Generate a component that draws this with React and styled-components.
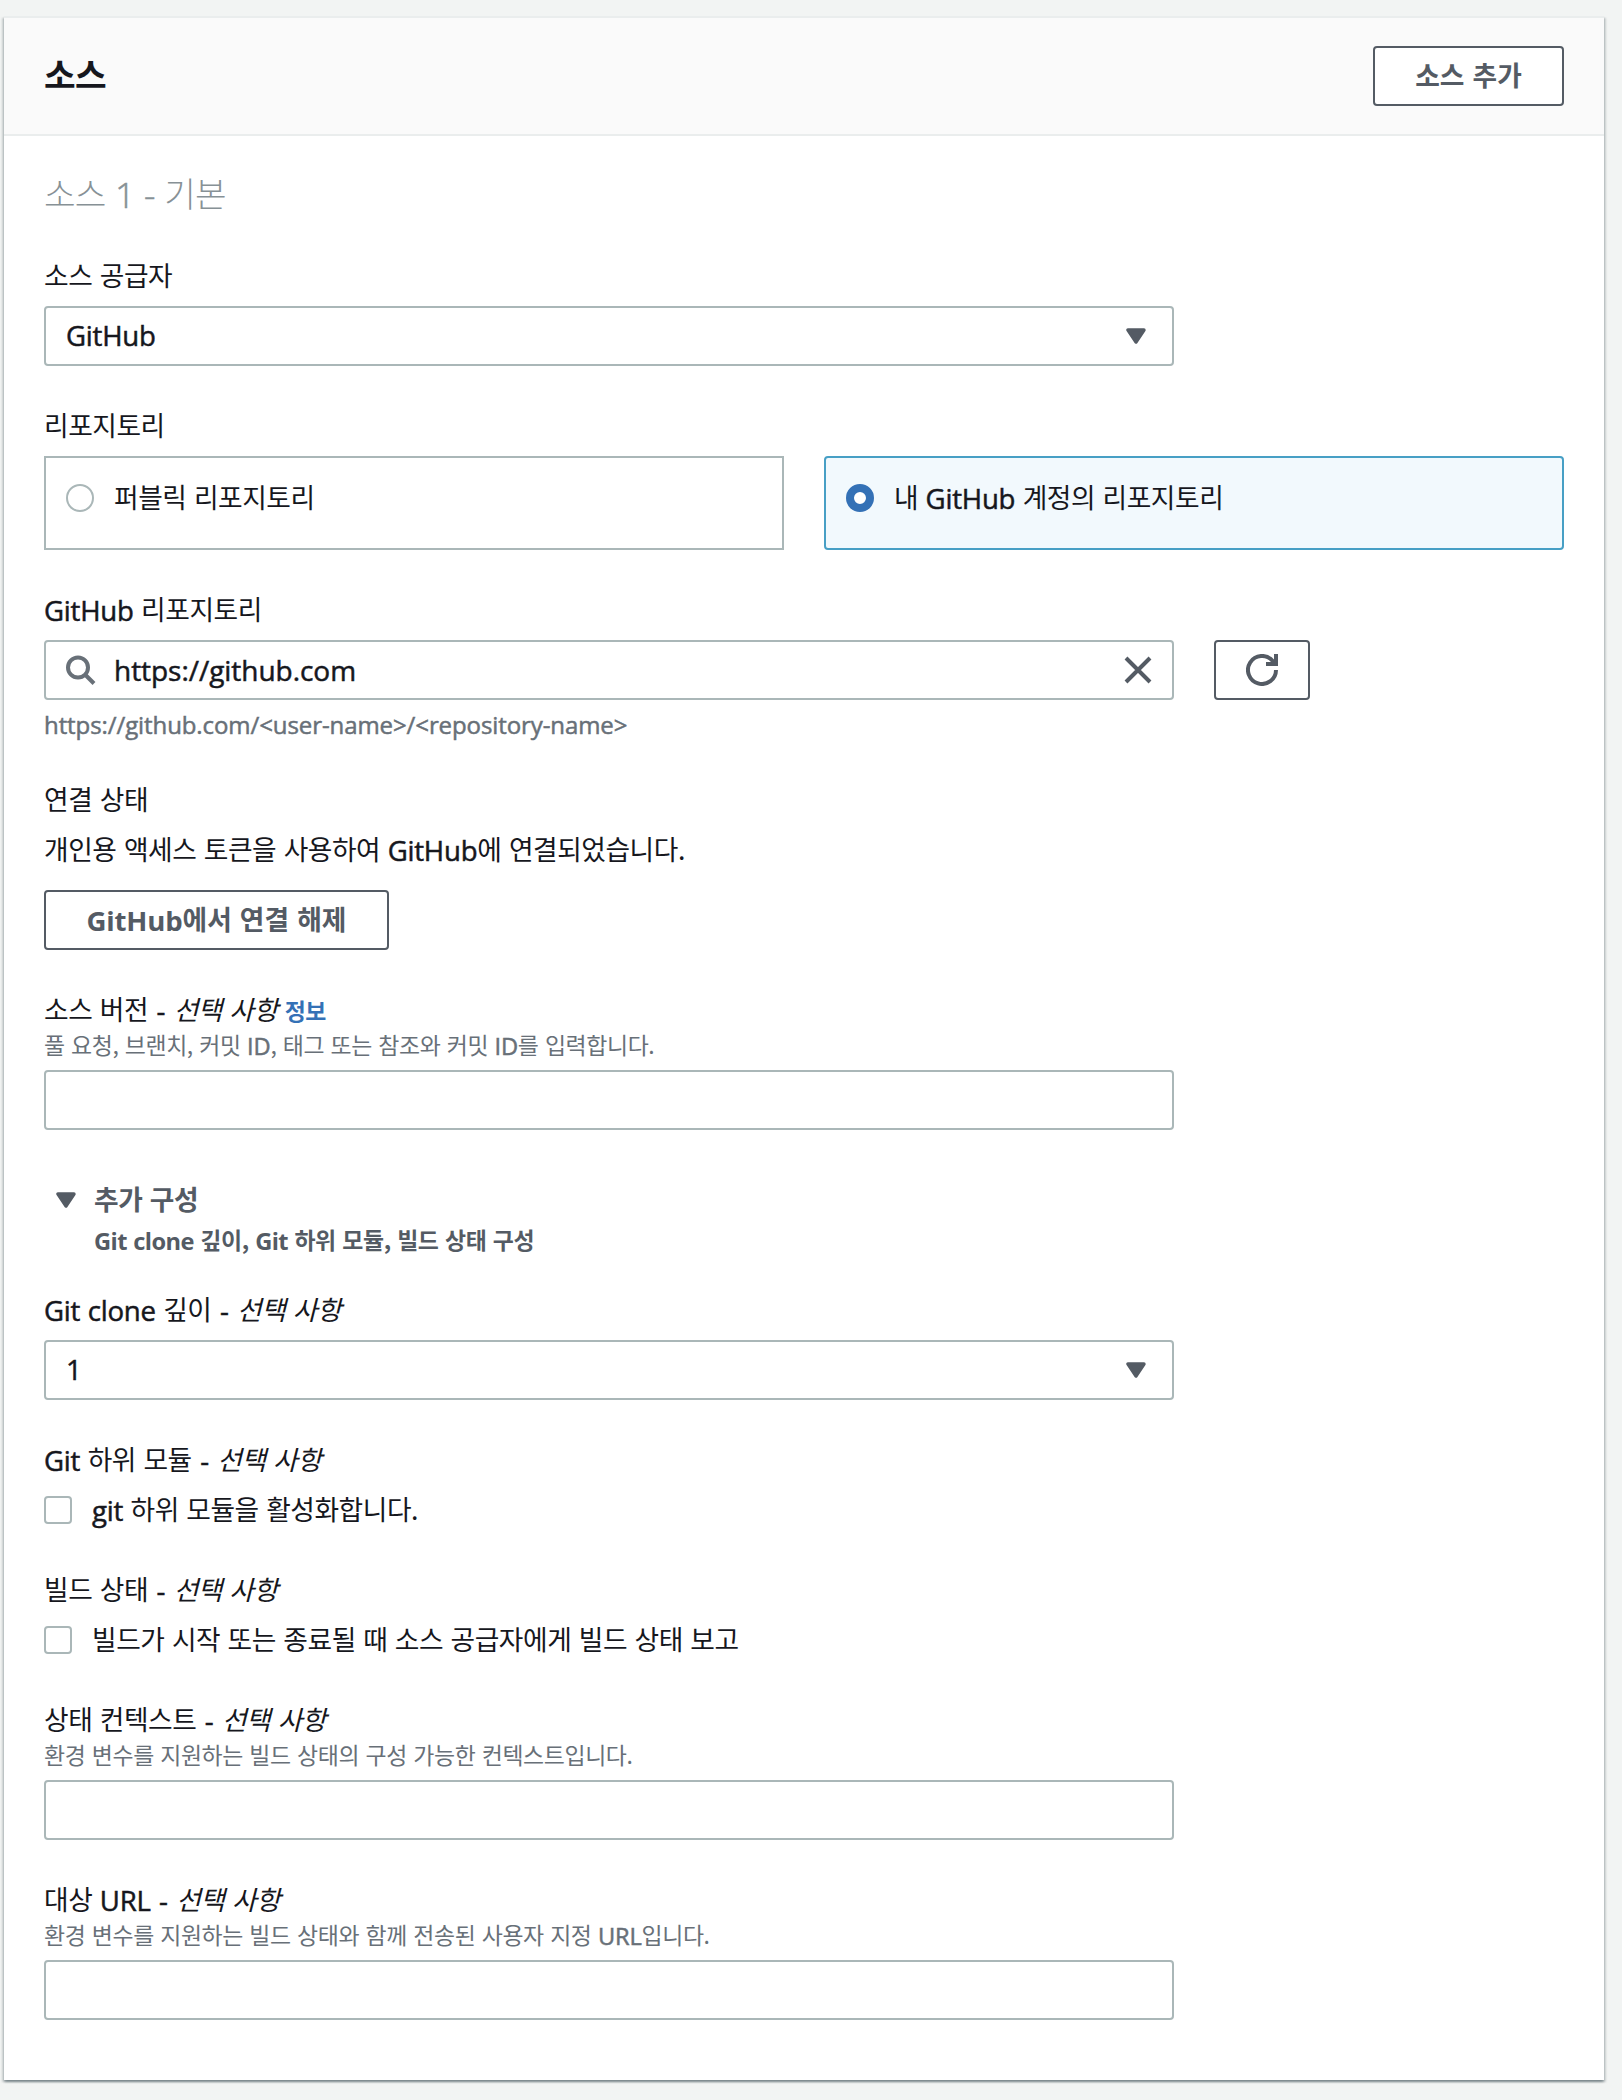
import { useState } from 'react';
import styled, { createGlobalStyle, css } from 'styled-components';

const GlobalStyle = createGlobalStyle`
  * {
    box-sizing: border-box;
  }

  body {
    margin: 0;
    min-height: 2100px;
    background: #f2f4f3;
    color: #16171d;
    font-family: "Open Sans", "Noto Sans CJK KR", sans-serif;
    font-size: 28px;
    line-height: 40px;
  }

  button, input {
    font: inherit;
    color: inherit;
  }
`;

// Text helpers
const Hangul = styled.span`
  position: relative;
  top: -1px;
  font-family: "Noto Sans CJK KR", sans-serif;
  font-size: 0.955em;
  letter-spacing: calc(-0.017em + var(--tracking, 0px));
  word-spacing: 0.072em;
`;

// Open Sans has no medium cut here, a thin stroke stands in for it
const medium = css`
  -webkit-text-stroke: 0.5px currentColor;
`;

const Latin = styled.span`
  font-size: 0.985em;
  letter-spacing: calc(${({ $strong }) => ($strong ? '-0.025em' : '-0.008em')} + var(--tracking, 0px));
  ${({ $strong }) => ($strong ? 'font-weight: 700;' : medium)}
`;

const Dash = styled(Latin)`
  padding: 0 1px;
`;

function Mixed({ children, strong }) {
  const runs = children.match(/[가-힣 ,.]+|[^가-힣 ,.]+/g) || [];
  return runs.map((run, i) =>
    /[^가-힣 ,.]/.test(run)
      ? <Latin key={i} $strong={strong}>{run}</Latin>
      : <Hangul key={i}>{run}</Hangul>
  );
}

// Panel
const Panel = styled.section`
  width: 1600px;
  margin: 16px 0 0 4px;
  border-top: 2px solid #eaeded;
  background: #fff;
  box-shadow:
    0 2px 2px 0 rgba(0, 28, 36, 0.3),
    2px 2px 2px 0 rgba(0, 28, 36, 0.15),
    -2px 2px 2px 0 rgba(0, 28, 36, 0.15);
`;

const PanelHeader = styled.header`
  display: flex;
  align-items: center;
  justify-content: space-between;
  height: 118px;
  padding: 0 40px;
  border-bottom: 2px solid #eaeded;
  background: #fafafa;
`;

const PanelTitle = styled.h2`
  margin: 0;
  padding-bottom: 3px;
  font-size: 36px;
  line-height: 44px;
  font-weight: 700;
`;

const PanelBody = styled.div`
  display: flex;
  flex-direction: column;
  gap: 40px;
  padding: 36px 40px 60px;
`;

const SourceTitle = styled.h3`
  --tracking: -0.2px;
  margin: 0;
  height: 44px;
  font-size: 36px;
  line-height: 42px;
  font-weight: 300;
  color: #879196;
`;

// Fields
const Label = styled.div`
  height: 40px;
  white-space: nowrap;

  em {
    font-style: italic;
  }
`;

const FieldBox = styled.div`
  display: flex;
  flex-direction: column;
`;

const Control = styled.div`
  margin-top: ${({ $gap = 10 }) => $gap}px;
`;

const Hint = styled.div`
  height: 38px;
  font-size: 24px;
  line-height: 30px;
  color: #687078;
  white-space: nowrap;
`;

const Constraint = styled.div`
  height: 40px;
  padding-top: 9px;
  font-size: 24px;
  line-height: 32px;
  letter-spacing: -0.09px;
  color: #687078;
  ${medium}
`;

const InfoLink = styled.a`
  margin-left: 7px;
  font-size: 24px;
  font-weight: 700;
  color: #3471b6;
  text-decoration: none;
`;

const boxed = css`
  width: 1130px;
  height: 60px;
  border: 2px solid #aab7b8;
  border-radius: 4px;
  background: #fff;
`;

const TextInput = styled.input`
  ${boxed}
  display: block;
  padding: 0 20px;
  outline: none;
`;

const SelectBox = styled.div`
  ${boxed}
  display: flex;
  align-items: center;
  justify-content: space-between;
  padding: 0 26px 0 20px;
`;

const SearchRow = styled.div`
  display: flex;
  gap: 40px;
`;

const SearchBox = styled.div`
  ${boxed}
  display: flex;
  align-items: center;
  padding: 0 20px;

  svg {
    flex: none;
  }
`;

const SearchInput = styled.input`
  flex: 1;
  margin-left: 18px;
  padding: 0;
  border: 0;
  outline: none;
  letter-spacing: -0.04px;
  ${medium}
`;

const Button = styled.button`
  --tracking: 0.5px;
  display: flex;
  align-items: center;
  justify-content: center;
  width: ${({ $width }) => $width}px;
  height: 60px;
  padding: 0;
  border: 2px solid #545b64;
  border-radius: 4px;
  background: #fff;
  color: #545b64;
  font-weight: 700;
  white-space: nowrap;
`;

// Radio tiles
const Tiles = styled.div`
  display: grid;
  grid-template-columns: 1fr 1fr;
  gap: 40px;
`;

const Tile = styled.div`
  display: flex;
  align-items: flex-start;
  height: 94px;
  padding: 20px;
  border: 2px solid ${({ $selected }) => ($selected ? '#479fc5' : '#aab7b8')};
  border-radius: ${({ $selected }) => ($selected ? '4px' : '0')};
  background: ${({ $selected }) => ($selected ? '#f2f9fd' : '#fff')};
  cursor: pointer;
`;

const Radio = styled.span`
  flex: none;
  width: 28px;
  height: 28px;
  margin: 6px 20px 0 0;
  border: ${({ $selected }) => ($selected ? '8px solid #3471b6' : '2px solid #aab7b8')};
  border-radius: 50%;
  background: #fff;
`;

// Checkboxes
const CheckRow = styled.label`
  display: flex;
  height: 40px;
`;

const Checkbox = styled.input`
  appearance: none;
  width: 28px;
  height: 28px;
  margin: 6px 20px 0 0;
  border: 2px solid #aab7b8;
  border-radius: 4px;
  background: #fff;
`;

// Expandable section
const Expander = styled.div`
  display: flex;
  gap: 18px;
  height: 80px;
  margin: 10px 0 -10px;
  padding-left: 12px;
  color: #545b64;
  font-weight: 700;

  svg {
    margin-top: 12px;
  }
`;

const ExpanderNote = styled.div`
  padding-top: 4px;
  font-size: 24px;
  line-height: 32px;
`;

function Caret() {
  return (
    <svg width="20" height="16" viewBox="0 0 20 16">
      <path d="M2 2h16l-8 12z" fill="#545b64" stroke="#545b64" strokeWidth="3.4" strokeLinejoin="round" />
    </svg>
  );
}

function SearchIcon() {
  return (
    <svg width="30" height="30" viewBox="0 0 30 30" fill="none" stroke="#687078" strokeWidth="4">
      <circle cx="12" cy="12.5" r="10" />
      <path d="M19 19.5l9 9" />
    </svg>
  );
}

function ClearIcon() {
  return (
    <svg width="28" height="28" viewBox="0 0 28 28" fill="none" stroke="#545b64" strokeWidth="4">
      <path d="M2 2l24 24M26 2L2 26" />
    </svg>
  );
}

function RefreshIcon() {
  return (
    <svg width="32" height="32" viewBox="0 0 32 32" fill="none" stroke="#545b64" strokeWidth="4">
      <path d="M30 16a14 14 0 1 1-3.5-9.3L29 10" />
      <path d="M30 0v10H20" />
    </svg>
  );
}

function Field({ label, optional, info, hint, children }) {
  return (
    <FieldBox>
      <Label>
        <Mixed>{label}</Mixed>
        {optional && (
          <>
            <Hangul> </Hangul>
            <Dash>-</Dash>
            <Hangul> </Hangul>
            <em><Mixed>선택 사항</Mixed></em>
          </>
        )}
        {info && <InfoLink><Mixed>정보</Mixed></InfoLink>}
      </Label>
      {hint && <Hint><Mixed>{hint}</Mixed></Hint>}
      <Control $gap={hint ? 2 : 10}>{children}</Control>
    </FieldBox>
  );
}

const REPOSITORY_TYPES = [
  { id: 'public', text: '퍼블릭 리포지토리' },
  { id: 'mine', text: '내 GitHub 계정의 리포지토리' },
];

export default function App() {
  const [repositoryType, setRepositoryType] = useState('mine');
  const [repository, setRepository] = useState('https://github.com');

  return (
    <>
      <GlobalStyle />
      <Panel>
        <PanelHeader>
          <PanelTitle><Mixed strong>소스</Mixed></PanelTitle>
          <Button $width={191}><span><Mixed strong>소스 추가</Mixed></span></Button>
        </PanelHeader>

        <PanelBody>
          <SourceTitle><Mixed>소스 1 - 기본</Mixed></SourceTitle>

          <Field label="소스 공급자">
            <SelectBox><Latin>GitHub</Latin><Caret /></SelectBox>
          </Field>

          <Field label="리포지토리">
            <Tiles>
              {REPOSITORY_TYPES.map(({ id, text }) => (
                <Tile key={id} $selected={id === repositoryType} onClick={() => setRepositoryType(id)}>
                  <Radio $selected={id === repositoryType} />
                  <span><Mixed>{text}</Mixed></span>
                </Tile>
              ))}
            </Tiles>
          </Field>

          <Field label="GitHub 리포지토리">
            <SearchRow>
              <SearchBox>
                <SearchIcon />
                <SearchInput value={repository} onChange={(event) => setRepository(event.target.value)} />
                <ClearIcon />
              </SearchBox>
              <Button $width={96}><RefreshIcon /></Button>
            </SearchRow>
            <Constraint>{'https://github.com/<user-name>/<repository-name>'}</Constraint>
          </Field>

          <Field label="연결 상태">
            <Label><Mixed>개인용 액세스 토큰을 사용하여 GitHub에 연결되었습니다.</Mixed></Label>
            <Control $gap={20}>
              <Button $width={345}><span><Mixed strong>GitHub에서 연결 해제</Mixed></span></Button>
            </Control>
          </Field>

          <Field label="소스 버전" optional info hint="풀 요청, 브랜치, 커밋 ID, 태그 또는 참조와 커밋 ID를 입력합니다.">
            <TextInput />
          </Field>

          <Expander>
            <Caret />
            <div>
              <Mixed strong>추가 구성</Mixed>
              <ExpanderNote><Mixed strong>Git clone 깊이, Git 하위 모듈, 빌드 상태 구성</Mixed></ExpanderNote>
            </div>
          </Expander>

          <Field label="Git clone 깊이" optional>
            <SelectBox><Latin>1</Latin><Caret /></SelectBox>
          </Field>

          <Field label="Git 하위 모듈" optional>
            <CheckRow>
              <Checkbox type="checkbox" />
              <span><Mixed>git 하위 모듈을 활성화합니다.</Mixed></span>
            </CheckRow>
          </Field>

          <Field label="빌드 상태" optional>
            <CheckRow>
              <Checkbox type="checkbox" />
              <span><Mixed>빌드가 시작 또는 종료될 때 소스 공급자에게 빌드 상태 보고</Mixed></span>
            </CheckRow>
          </Field>

          <Field label="상태 컨텍스트" optional hint="환경 변수를 지원하는 빌드 상태의 구성 가능한 컨텍스트입니다.">
            <TextInput />
          </Field>

          <Field label="대상 URL" optional hint="환경 변수를 지원하는 빌드 상태와 함께 전송된 사용자 지정 URL입니다.">
            <TextInput />
          </Field>
        </PanelBody>
      </Panel>
    </>
  );
}
